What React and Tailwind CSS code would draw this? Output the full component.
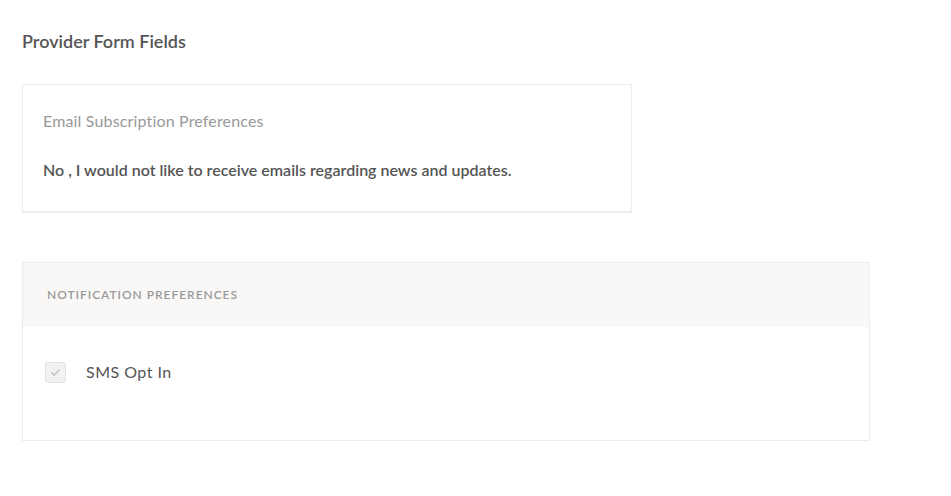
import React from 'react';

export default function App() {
  return (
    <div className="min-h-screen bg-white pl-[22px] pt-[30px]" style={{ fontFamily: 'Lato, "Noto Sans", sans-serif' }}>
      <h1 className="text-[18px] font-semibold text-[#555555] leading-[22px]">Provider Form Fields</h1>

      {/* Email subscription card */}
      <div className="mt-[32px] w-[610px] h-[129px] border border-[#eeece8] border-b-2 bg-white px-[20px] pt-[26px]">
        <div className="text-[16px] text-[#999999] leading-[20px] tracking-[0.01em]">Email Subscription Preferences</div>
        <div className="mt-[29px] text-[16px] font-semibold text-[#555555] leading-[20px]">
          No , I would not like to receive emails regarding news and updates.
        </div>
      </div>

      {/* Notification preferences */}
      <div className="mt-[49px] w-[848px] border border-[#eeece8] bg-white">
        <div className="h-[64px] bg-[#f9f8f6] flex items-center px-[24px]">
          <span className="text-[12px] font-semibold uppercase tracking-[0.08em] text-[#999999]">Notification Preferences</span>
        </div>
        <div className="h-[113px] flex items-start pt-[33px] px-[22px]">
          <div className="flex items-center gap-[20px]">
            <span className="w-[21px] h-[21px] rounded-[3px] border border-[#e2e2e2] bg-[#f2f2f2] flex items-center justify-center">
              <svg width="11" height="9" viewBox="0 0 11 9" fill="none">
                <path d="M1.5 4.5 L4.2 7.2 L9.5 1.5" stroke="#bbbbbb" strokeWidth="1.2" />
              </svg>
            </span>
            <span className="text-[16px] text-[#555555] tracking-[0.03em]">SMS Opt In</span>
          </div>
        </div>
      </div>
    </div>
  );
}
